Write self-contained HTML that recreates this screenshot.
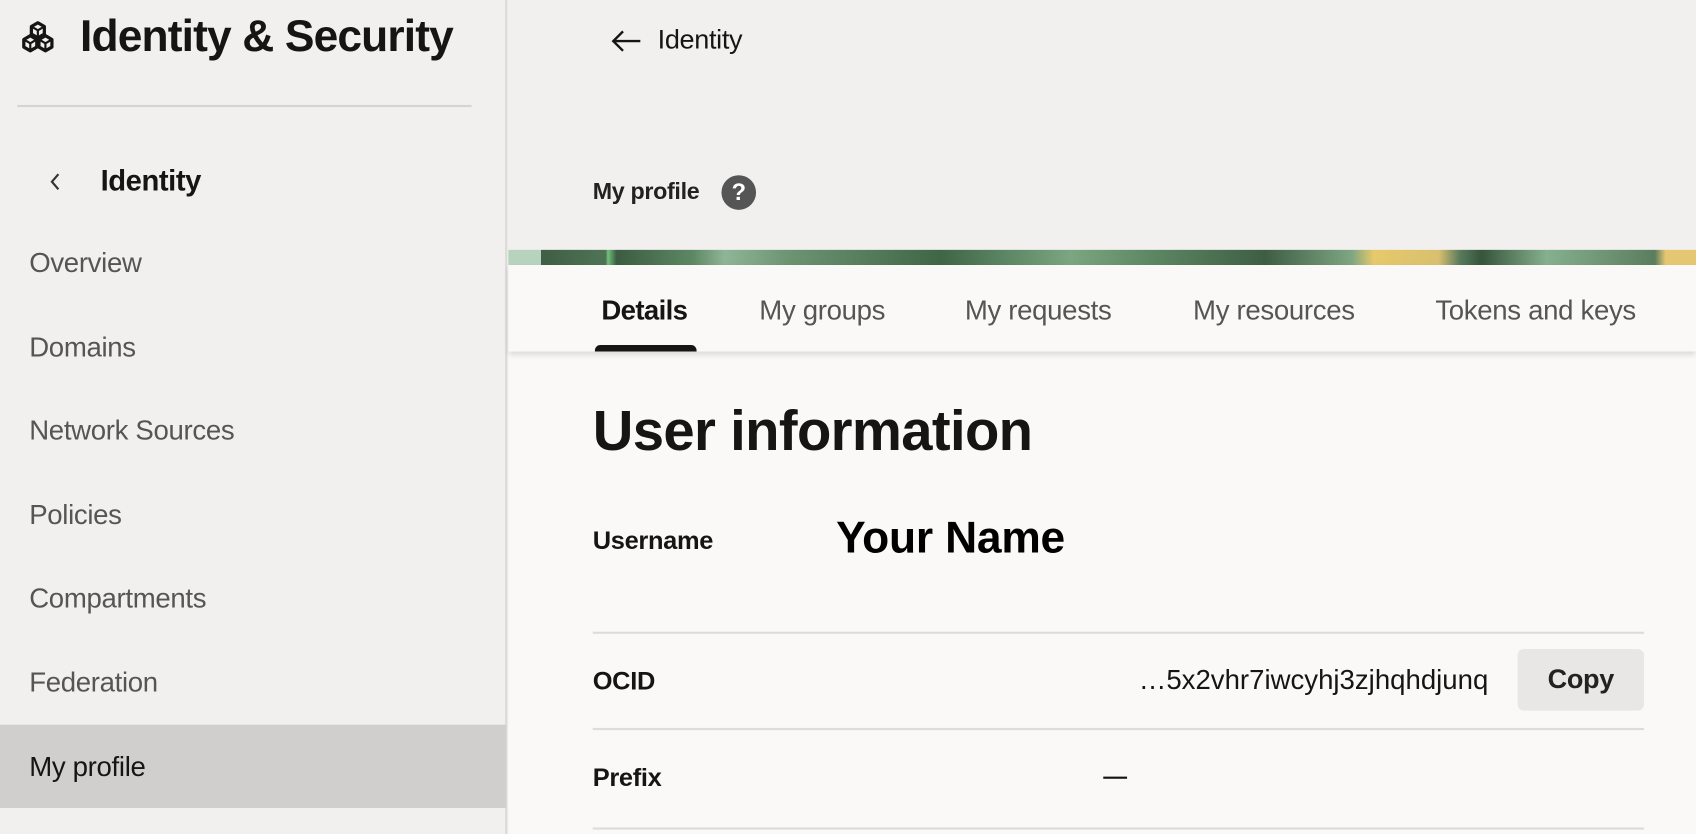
<!DOCTYPE html>
<html><head><meta charset="utf-8"><style>
html,body{margin:0;padding:0;width:1696px;height:834px;overflow:hidden;background:#f1f0ee;}
#w{position:absolute;left:0;top:0;width:1568px;height:771px;transform:scale(1.08163);transform-origin:0 0;font-family:"Liberation Sans",sans-serif;color:#161513;}
.a{position:absolute;white-space:nowrap;}
.nav{position:absolute;left:27px;font-size:25.5px;color:#555;transform:translateY(-50%);letter-spacing:-0.3px}
.line{position:absolute;left:548px;width:972px;height:2px;background:#dedcda}
.lbl{position:absolute;left:548px;font-size:23.5px;font-weight:bold;transform:translateY(-50%);letter-spacing:-0.3px}
.tab{position:absolute;top:288px;font-size:25.5px;color:#555;transform:translateY(-50%);letter-spacing:-0.3px}
</style></head><body><div id="w">
<div class="a" style="left:0;top:0;width:469px;height:771px;background:#f1f0ee;border-right:2px solid #dcdad8;box-sizing:border-box"></div>
<svg class="a" style="left:18px;top:19px" width="34" height="30" viewBox="0 0 34 30" fill="none" stroke="#161513" stroke-width="3" stroke-linejoin="round"><path d="M17 2l6 3.5v7L17 16l-6-3.5v-7z"/><path d="M10 14l6 3.5v7L10 28l-6-3.5v-7z"/><path d="M24 14l6 3.5v7L24 28l-6-3.5v-7z"/><path d="M11 5.5l6 3.5 6-3.5M17 9v7M4 17.5l6 3.5 6-3.5M10 21v7M18 17.5l6 3.5 6-3.5M24 21v7" stroke-width="2"/></svg>
<div class="a" style="left:74px;top:10px;font-size:41px;font-weight:bold;letter-spacing:-0.8px">Identity &amp; Security</div>
<div class="a" style="left:16px;top:97px;width:420px;height:2px;background:#d6d4d2"></div>
<svg class="a" style="left:44px;top:158px" width="14" height="20" viewBox="0 0 14 20"><path d="M10 3L4 10l6 7" fill="none" stroke="#333" stroke-width="2"/></svg>
<div class="a" style="left:93px;top:152px;font-size:27px;font-weight:bold;letter-spacing:-0.4px">Identity</div>
<div class="nav" style="top:244px">Overview</div>
<div class="nav" style="top:322px">Domains</div>
<div class="nav" style="top:399px">Network Sources</div>
<div class="nav" style="top:477px">Policies</div>
<div class="nav" style="top:554px">Compartments</div>
<div class="nav" style="top:632px">Federation</div>
<div class="a" style="left:0;top:670px;width:468px;height:77px;background:#d0cfcd"></div>
<div class="nav" style="top:710px;color:#161513">My profile</div>

<svg class="a" style="left:564px;top:26px" width="30" height="24" viewBox="0 0 30 24"><path d="M28 12H3M12 3l-9 9 9 9" fill="none" stroke="#161513" stroke-width="2.2"/></svg>
<div class="a" style="left:608px;top:23px;font-size:25px;letter-spacing:-0.3px">Identity</div>
<div class="a" style="left:548px;top:165px;font-size:21.5px;font-weight:bold;color:#222;letter-spacing:-0.3px">My profile</div>
<div class="a" style="left:667px;top:162px;width:32px;height:32px;border-radius:50%;background:#555;color:#fff;font-size:22px;font-weight:bold;text-align:center;line-height:32px">?</div>

<div class="a" style="left:470px;top:231px;width:1098px;height:14px;background:linear-gradient(90deg,#b7d3bd 0,#b7d3bd 30px,#3f5e44 30px,#4f7455 90px,#73c07e 92px,#3b5c41 100px,#5d8763 170px,#8fb596 200px,#6c9471 260px,#3f6646 400px,#7ba681 520px,#5b8561 600px,#3e5e44 700px,#7ea682 780px,#e6c96a 800px,#d9c070 860px,#577a5c 880px,#36553b 900px,#86b08d 960px,#5a7d5e 1060px,#e5c773 1070px)"></div>
<div class="a" style="left:470px;top:245px;width:1098px;height:526px;background:#faf9f7"></div>
<div class="a" style="left:470px;top:245px;width:1098px;height:80px;background:#faf9f7;box-shadow:0 3px 5px rgba(0,0,0,0.12)"></div>
<div class="tab" style="left:556px;color:#161513;font-weight:bold;letter-spacing:-0.6px">Details</div>
<div class="tab" style="left:702px">My groups</div>
<div class="tab" style="left:892px">My requests</div>
<div class="tab" style="left:1103px">My resources</div>
<div class="tab" style="left:1327px">Tokens and keys</div>
<div class="a" style="left:550px;top:319px;width:94px;height:6px;background:#161513;border-radius:5px 5px 0 0"></div>

<div class="a" style="left:548px;top:369px;font-size:52px;font-weight:bold;letter-spacing:-0.6px">User information</div>
<div class="lbl" style="top:500px">Username</div>
<div class="a" style="left:773px;top:474px;font-size:41px;font-weight:bold;letter-spacing:-0.2px;color:#000">Your Name</div>
<div class="line" style="top:584px"></div>
<div class="lbl" style="top:630px">OCID</div>
<div class="a" style="right:192px;top:615px;font-size:25.5px;color:#161513">…5x2vhr7iwcyhj3zjhqhdjunq</div>
<div class="a" style="left:1403px;top:600px;width:117px;height:57px;background:#e8e7e5;border-radius:6px;font-size:25px;font-weight:bold;color:#222;text-align:center;line-height:57px;letter-spacing:-0.3px">Copy</div>
<div class="line" style="top:673px"></div>
<div class="lbl" style="top:719px">Prefix</div>
<div class="a" style="left:1020px;top:718px;width:22px;height:2px;background:#161513"></div>
<div class="line" style="top:765px"></div>
</div></body></html>
